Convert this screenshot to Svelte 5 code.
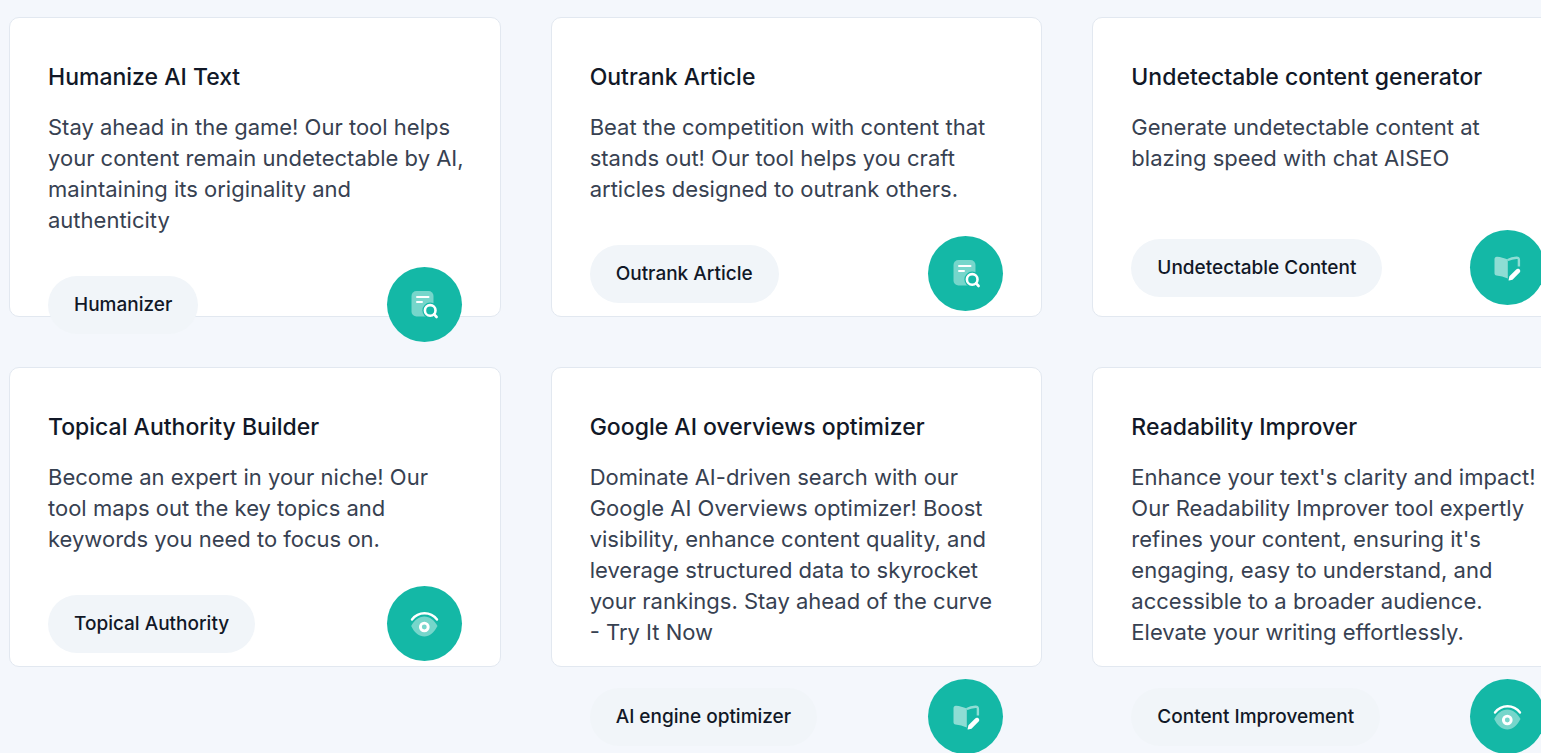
<script>
  const tools = [
    {
      title: 'Humanize AI Text',
      text: 'Stay ahead in the game! Our tool helps your content remain undetectable by AI, maintaining its originality and authenticity',
      tag: 'Humanizer',
      icon: 'search'
    },
    {
      title: 'Outrank Article',
      text: 'Beat the competition with content that stands out! Our tool helps you craft articles designed to outrank others.',
      tag: 'Outrank Article',
      icon: 'search'
    },
    {
      title: 'Undetectable content generator',
      text: 'Generate undetectable content at blazing speed with chat AISEO',
      tag: 'Undetectable Content',
      icon: 'book'
    },
    {
      title: 'Topical Authority Builder',
      text: 'Become an expert in your niche! Our tool maps out the key topics and keywords you need to focus on.',
      tag: 'Topical Authority',
      icon: 'eye'
    },
    {
      title: 'Google AI overviews optimizer',
      text: 'Dominate AI-driven search with our Google AI Overviews optimizer! Boost visibility, enhance content quality, and leverage structured data to skyrocket your rankings. Stay ahead of the curve - Try It Now',
      tag: 'AI engine optimizer',
      icon: 'book'
    },
    {
      title: 'Readability Improver',
      text: "Enhance your text's clarity and impact! Our Readability Improver tool expertly refines your content, ensuring it's engaging, easy to understand, and accessible to a broader audience. Elevate your writing effortlessly.",
      tag: 'Content Improvement',
      icon: 'eye'
    }
  ];
</script>

<main>
  <div class="grid">
    {#each tools as tool}
      <article class="card">
        <h2>{tool.title}</h2>
        <p>{tool.text}</p>
        <div class="actions">
          <button class="tag" type="button">{tool.tag}</button>
          <button class="round" type="button" aria-label={tool.title}>
            <svg viewBox="0 0 30 30" fill="none" aria-hidden="true">
              {#if tool.icon === 'search'}
                <rect x="2.5" y="1" width="22" height="25.5" rx="5" fill="#fff" fill-opacity=".42" />
                <path d="M8 7h11.5M8 12h5" stroke="#fff" stroke-width="2" stroke-linecap="round" />
                <circle cx="21.2" cy="20.4" r="7.8" fill="#14b8a6" />
                <circle cx="21.2" cy="20.4" r="5.3" stroke="#fff" stroke-width="2.6" />
                <path d="m25 24.2 2.6 2.8" stroke="#fff" stroke-width="2.6" stroke-linecap="round" />
              {:else if tool.icon === 'eye'}
                <path d="M2.2 17C5 11.500 9.700 7.500 15.300 7.500S25.500 11.500 28.500 17C25 23.500 20.500 27.500 15.300 27.500S5.200 23.500 2.200 17Z" fill="#fff" fill-opacity=".42" />
                <path d="M3 11C9.500 2.300 21.500 2.300 28 11" stroke="#14b8a6" stroke-width="4.500" />
                <path d="M3 10.500C9.500 2.200 21.500 2.200 28 10.500" stroke="#fff" stroke-width="2.400" stroke-linecap="round" />
                <circle cx="15.300" cy="18" r="3.900" stroke="#fff" stroke-width="2.900" />
              {:else}
                <path d="M2.500 6.200C2.500 4.500 3.600 3.400 5.300 3.700C8.500 4.100 12 4.800 15.800 6.500V25.500C12 23.800 8.500 22.800 4.500 22.400C3.200 22.200 2.500 21.500 2.500 20.200Z" fill="#fff" fill-opacity=".52" />
                <path d="M15.800 7C18.500 5.600 21.500 4.900 24.500 4.700C26.100 4.600 26.900 5.400 26.900 7V13.500" stroke="#fff" stroke-opacity=".52" stroke-width="2.400" />
                <path d="M17.400 23.200L24.200 16.400C26.300 14.300 29.800 17.300 27.600 19.600L20.500 26.800L17 27.600C16.700 27.600 16.500 27.400 16.600 27Z" fill="#fff" />
              {/if}
            </svg>
          </button>
        </div>
      </article>
    {/each}
  </div>
</main>

<style>
  :global(body) {
    background: #f4f7fc;
  }
  main {
    padding: 17px 0 86px 9px;
    font-family: Inter, 'Liberation Sans', sans-serif;
    overflow: clip;
  }
  .grid {
    display: grid;
    grid-template-columns: repeat(3, minmax(0, 1fr));
    gap: 50px;
    width: calc(100% + 43px);
  }
  .card {
    box-sizing: border-box;
    height: 300px;
    padding: 44px 38px 0;
    background: #fff;
    border: 1px solid #e2e8f0;
    border-radius: 10px;
  }
  h2 {
    margin: 0 0 19px;
    font-size: 23px;
    line-height: 31px;
    font-weight: 500;
    color: #111827;
  }
  p {
    margin: 0 -3px 31px 0;
    min-height: 87px;
    font-size: 22px;
    line-height: 31px;
    font-weight: 400;
    color: #374151;
  }
  .actions {
    display: flex;
    align-items: center;
    justify-content: space-between;
  }
  button {
    border: 0;
    font-family: inherit;
    cursor: pointer;
  }
  .tag {
    height: 58px;
    padding: 0 26px;
    border-radius: 29px;
    background: #f1f5f9;
    color: #111827;
    font-size: 19px;
    font-weight: 500;
    white-space: nowrap;
  }
  .round {
    display: grid;
    place-items: center;
    width: 75px;
    height: 75px;
    padding: 0;
    border-radius: 50%;
    background: #14b8a6;
  }
  svg {
    width: 30px;
    height: 30px;
  }
</style>
